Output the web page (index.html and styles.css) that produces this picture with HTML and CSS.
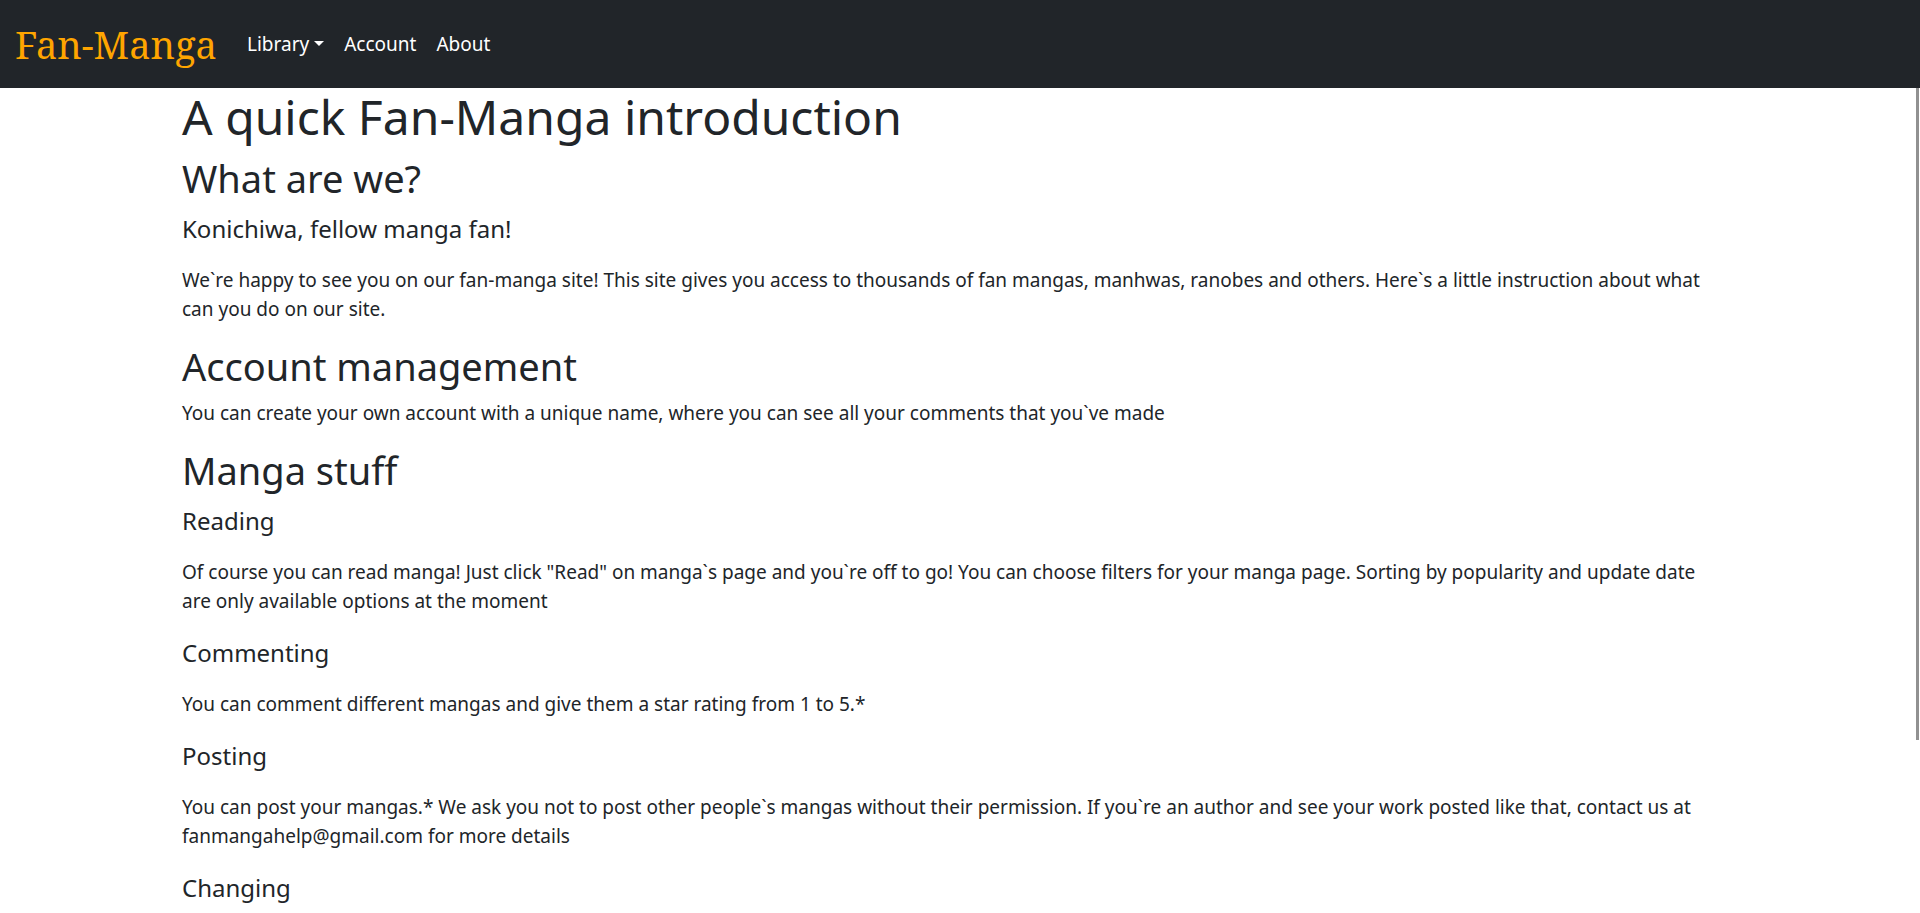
FILE: index.html
```html
<!DOCTYPE html>
<html lang="en">
<head>
<meta charset="utf-8">
<title>Fan-Manga</title>
<link rel="stylesheet" href="styles.css">
</head>
<body>
<nav class="navbar">
  <a class="brand" href="#">Fan-Manga</a>
  <ul class="nav-list">
    <li><button class="nav-link dropdown-toggle" type="button">Library</button></li>
    <li><a class="nav-link" href="#">Account</a></li>
    <li><a class="nav-link" href="#">About</a></li>
  </ul>
</nav>
<div class="page">
  <main class="content">
    <h1>A quick Fan-Manga introduction</h1>
    <h2>What are we?</h2>
    <p class="lead">Konichiwa, fellow manga fan!</p>
    <p>We`re happy to see you on our fan-manga site! This site gives you access to thousands of fan mangas, manhwas, ranobes and others. Here`s a little instruction about what can you do on our site.</p>
    <h2>Account management</h2>
    <p>You can create your own account with a unique name, where you can see all your comments that you`ve made</p>
    <h2>Manga stuff</h2>
    <p class="lead">Reading</p>
    <p>Of course you can read manga! Just click "Read" on manga`s page and you`re off to go! You can choose filters for your manga page. Sorting by popularity and update date are only available options at the moment</p>
    <p class="lead">Commenting</p>
    <p>You can comment different mangas and give them a star rating from 1 to 5.*</p>
    <p class="lead">Posting</p>
    <p>You can post your mangas.* We ask you not to post other people`s mangas without their permission. If you`re an author and see your work posted like that, contact us at fanmangahelp@gmail.com for more details</p>
    <p class="lead">Changing</p>
  </main>
  <div class="scroll-track"><div class="scroll-thumb"></div></div>
</div>
</body>
</html>
```
FILE: styles.css
```css
* {
  box-sizing: border-box;
}

body {
  margin: 0;
  height: 100vh;
  display: flex;
  flex-direction: column;
  overflow: hidden;
  font-family: "Noto Sans", "Liberation Sans", sans-serif;
  font-size: 19px;
  line-height: 29px;
  color: #212529;
  background: #fff;
}

.navbar {
  flex: none;
  display: flex;
  align-items: center;
  gap: 20px;
  padding: 8px 15px;
  background: #212529;
}

.brand {
  padding: 6px 0;
  font-family: "Noto Serif", "DejaVu Serif", serif;
  font-size: 38px;
  line-height: 60px;
  color: #ffa500;
  text-decoration: none;
}

.nav-list {
  display: flex;
  margin: 0;
  padding: 0;
  list-style: none;
}

.nav-link {
  display: block;
  padding: 10px;
  border: 0;
  background: none;
  font: inherit;
  color: #fff;
  text-decoration: none;
}

.dropdown-toggle::after {
  content: "";
  display: inline-block;
  margin-left: 5px;
  vertical-align: 5px;
  border-top: 5px solid;
  border-right: 5px solid transparent;
  border-left: 5px solid transparent;
}

.page {
  flex: 1;
  min-height: 0;
  display: flex;
}

.content {
  flex: 1;
  max-width: 1584px;
  margin: 0 auto;
  padding: 0 32px 0 16px;
}

h1,
h2 {
  font-weight: 400;
}

h1 {
  margin: 0 0 9px;
  font-size: 48px;
  line-height: 58px;
}

h2 {
  margin: 0 0 10px;
  font-size: 38px;
  line-height: 46px;
}

p {
  margin: 0 0 19px;
}

.lead {
  font-size: 24px;
  line-height: 36px;
}

.scroll-track {
  width: 4px;
  padding-right: 1px;
}

.scroll-thumb {
  height: 79%;
  background: #919191;
}
```
